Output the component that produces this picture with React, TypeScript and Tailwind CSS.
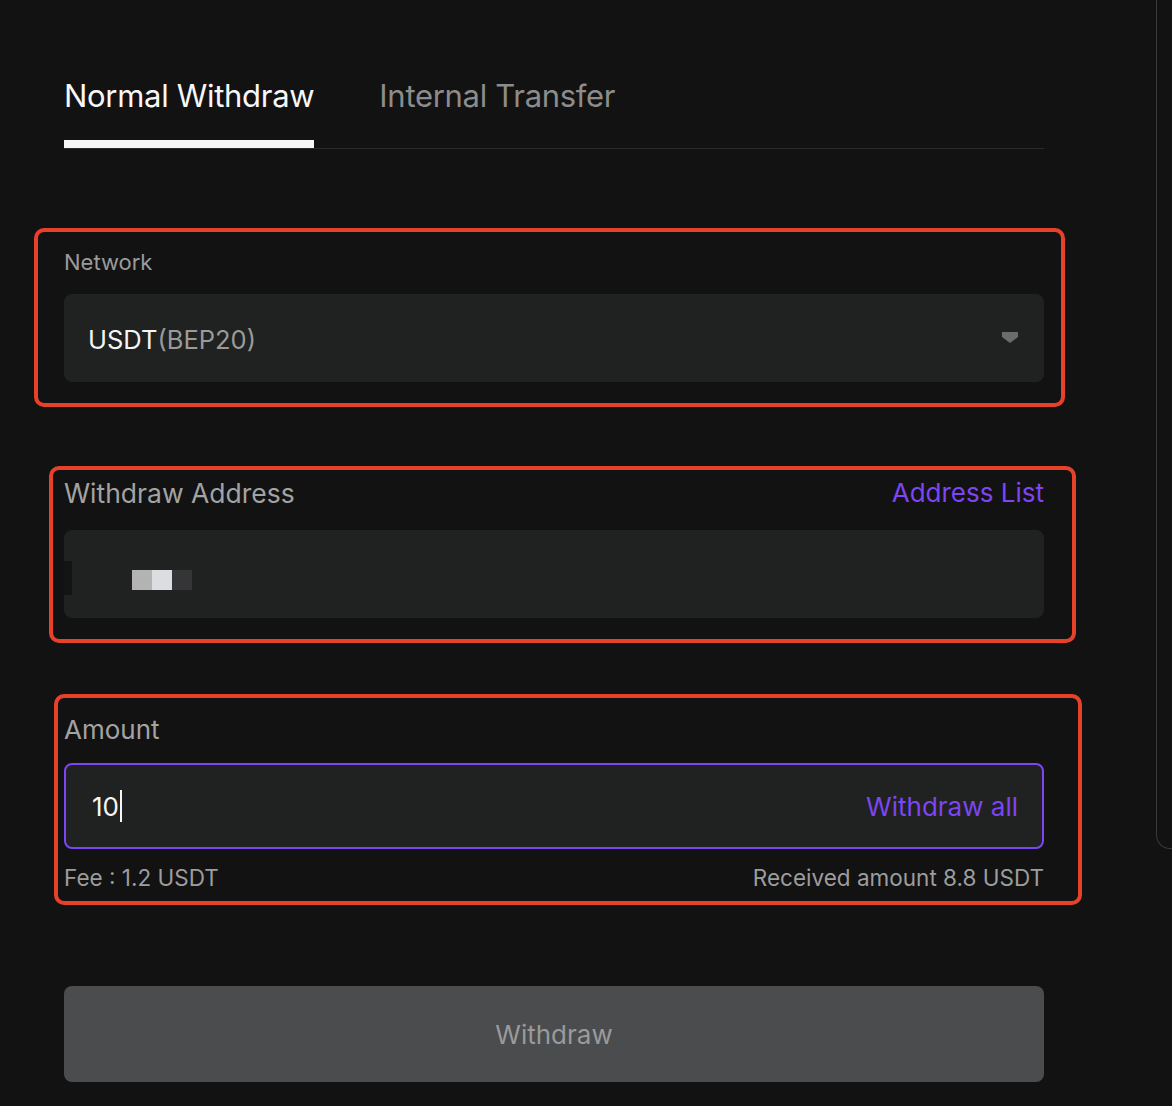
import { useState } from 'react'

const font = { fontFamily: 'Inter, "Liberation Sans", sans-serif' }

function RedBox({ className }: { className: string }) {
  // annotation frame drawn over a form block
  return <div className={`pointer-events-none absolute rounded-[10px] border-[4px] border-[#e8412a] ${className}`} />
}

export default function App() {
  const [tab, setTab] = useState<'normal' | 'internal'>('normal')

  return (
    <div className="flex h-[1106px] w-full overflow-hidden bg-[#121212] text-[#f5f5f7]" style={font}>
      <main className="flex-1 pl-16">
        <div className="w-[980px]">
          {/* Tabs */}
          <div className="flex gap-[65px] border-b border-[#2b2b2b] pt-[78px]">
            <button
              onClick={() => setTab('normal')}
              className={`border-b-[8px] pb-[26px] text-[31px] leading-[36px] tracking-[-0.3px] ${tab === 'normal' ? 'border-[#f5f6f8] text-[#f7f7f8]' : 'border-transparent text-[#8c8c8c]'}`}
            >
              Normal Withdraw
            </button>
            <button
              onClick={() => setTab('internal')}
              className={`border-b-[8px] pb-[26px] text-[31px] leading-[36px] tracking-[-0.3px] ${tab === 'internal' ? 'border-[#f5f6f8] text-[#f7f7f8]' : 'border-transparent text-[#8c8c8c]'}`}
            >
              Internal Transfer
            </button>
          </div>

          {/* Network */}
          <section className="relative mt-[99px]">
            <RedBox className="-top-[20px] -bottom-[25px] -left-[30px] -right-[21px]" />
            <div className="text-[22px] leading-[28px] text-[#9b9b9b]">Network</div>
            <div className="mt-[18px] flex h-[88px] items-center justify-between rounded-[8px] bg-[#202121] pl-6 pr-[26px]">
              <div className="pt-[5px] text-[25.5px]">
                <span className="text-[#f5f5f7]">USDT</span>
                <span className="text-[#9a9a9a]">(BEP20)</span>
              </div>
              <svg width="16" height="12" viewBox="0 0 16 12">
                <path d="M0 0H16V5L8 11L0 5Z" fill="#6c6c6c" />
              </svg>
            </div>
          </section>

          {/* Withdraw address */}
          <section className="relative mt-[95px]">
            <RedBox className="-top-[11px] -bottom-[25px] -left-[15px] -right-[32px]" />
            <div className="flex items-center justify-between leading-[32px]">
              <span className="text-[26.5px] text-[#a3a3a3]">Withdraw Address</span>
              <span className="text-[26px] text-[#7c45f5]">Address List</span>
            </div>
            <div className="mt-[21px] flex h-[88px] items-center rounded-[8px] bg-[#202121]">
              <div className="mt-[8px] h-[34px] w-[8px] bg-[#141414]" />
              <div className="ml-[60px] mt-[12px] flex">
                <div className="h-[20px] w-[20px] bg-[#b3b3b4]" />
                <div className="h-[20px] w-[20px] bg-[#dcdde0]" />
                <div className="h-[20px] w-[20px] bg-[#353537]" />
              </div>
            </div>
          </section>

          {/* Amount */}
          <section className="relative mt-[96px]">
            <RedBox className="-top-[20px] -bottom-[13px] -left-[10px] -right-[38px]" />
            <div className="text-[26px] leading-[32px] text-[#a3a3a3]">Amount</div>
            <div className="mt-[17px] flex h-[86px] items-center justify-between rounded-[8px] border-2 border-[#7c45f5] bg-[#202121] pl-[26px] pr-[24px]">
              <div className="flex items-center text-[26px] text-[#f5f5f7]">
                <span>10</span>
                <span className="ml-[1px] h-[32px] w-[2px] bg-[#f5f5f7]" />
              </div>
              <span className="text-[26px] text-[#7c45f5]">Withdraw all</span>
            </div>
            <div className="mt-[15px] flex items-center justify-between text-[22.5px] leading-[28px] text-[#9d9d9d]">
              <span>Fee : 1.2 USDT</span>
              <span>Received amount 8.8 USDT</span>
            </div>
          </section>

          <button className="mt-[94px] flex h-[96px] w-full items-center justify-center rounded-[8px] bg-[#4b4c4e] text-[26px] text-[#9a9a9a]">
            Withdraw
          </button>
        </div>
      </main>

      {/* edge of the neighbouring panel */}
      <div className="h-[849px] w-[16px] shrink-0 rounded-bl-[14px] border-b border-l border-[#3a3a3a]" />
    </div>
  )
}
